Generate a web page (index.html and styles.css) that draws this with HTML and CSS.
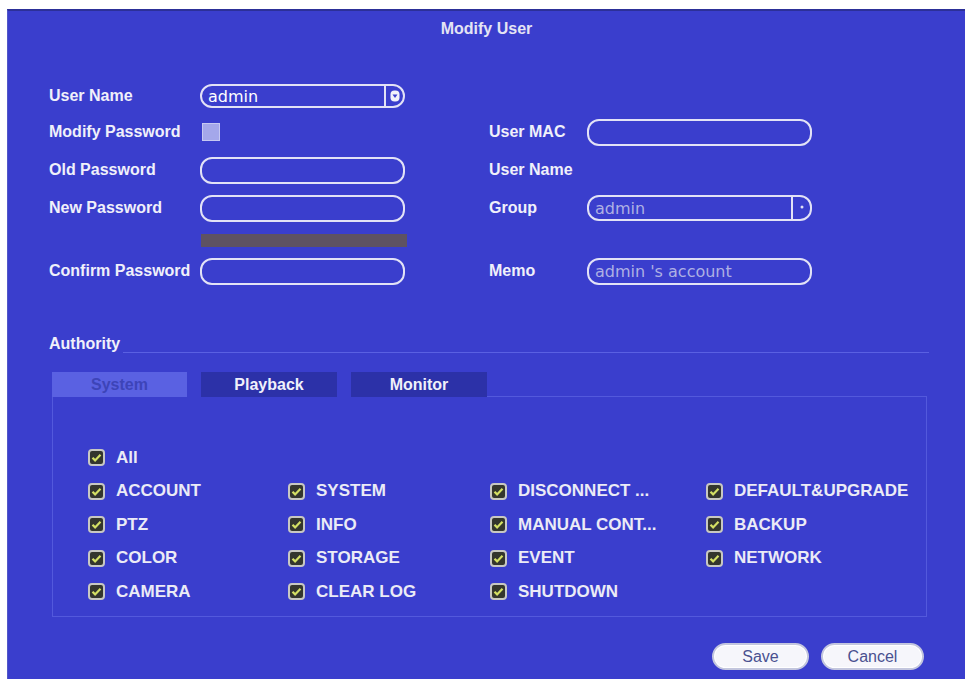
FILE: index.html
```html
<!DOCTYPE html>
<html lang="en">
<head>
  <meta charset="UTF-8">
  <meta name="viewport" content="width=device-width, initial-scale=1.0">
  <title>Modify User</title>
  <link rel="stylesheet" href="styles.css">
</head>
<body>

<div class="panel">
  <div class="title">Modify User</div>

  <form class="user-form" onsubmit="return false">
    <span class="lbl left">User Name</span>
    <div class="field left select">
      <span class="value">admin</span>
      <span class="drop"><svg viewBox="0 0 10 12" width="10" height="12"><rect x="0.5" y="0.5" width="9" height="11" rx="4" fill="#f2f2fa"/><path d="M2.5 4.5h5L5 8z" fill="#3a3ecd"/></svg></span>
    </div>

    <span class="lbl left">Modify Password</span>
    <div class="left"><span class="plain-box"></span></div>
    <span class="lbl right">User MAC</span>
    <div class="field right"></div>

    <span class="lbl left">Old Password</span>
    <div class="field left"></div>
    <span class="lbl right">User Name</span>

    <span class="lbl left">New Password</span>
    <div class="field left"></div>
    <span class="lbl right">Group</span>
    <div class="field right select muted">
      <span class="value">admin</span>
      <span class="drop"><svg viewBox="0 0 10 12" width="10" height="12"><circle cx="5" cy="5" r="1.5" fill="#e0e0f4"/></svg></span>
    </div>

    <div class="strength left"></div>

    <span class="lbl left">Confirm Password</span>
    <div class="field left"></div>
    <span class="lbl right">Memo</span>
    <div class="field right muted"><span class="value">admin 's account</span></div>
  </form>

  <div class="authority-head">
    <span class="lbl">Authority</span>
    <span class="rule"></span>
  </div>

  <div class="tabs">
    <span class="tab active">System</span>
    <span class="tab">Playback</span>
    <span class="tab">Monitor</span>
  </div>

  <div class="rights">
    <div class="right-item all"><svg class="tick" viewBox="0 0 17 17"><rect x="1" y="1" width="15" height="15" rx="3" fill="#34362d" stroke="#c8c8c2" stroke-width="2"/><path d="M4.5 8.8l2.6 2.6 5.4-5.6" fill="none" stroke="#d4e064" stroke-width="2.2"/></svg>All</div>

    <div class="right-item"><svg class="tick" viewBox="0 0 17 17"><rect x="1" y="1" width="15" height="15" rx="3" fill="#34362d" stroke="#c8c8c2" stroke-width="2"/><path d="M4.5 8.8l2.6 2.6 5.4-5.6" fill="none" stroke="#d4e064" stroke-width="2.2"/></svg>ACCOUNT</div>
    <div class="right-item"><svg class="tick" viewBox="0 0 17 17"><rect x="1" y="1" width="15" height="15" rx="3" fill="#34362d" stroke="#c8c8c2" stroke-width="2"/><path d="M4.5 8.8l2.6 2.6 5.4-5.6" fill="none" stroke="#d4e064" stroke-width="2.2"/></svg>SYSTEM</div>
    <div class="right-item"><svg class="tick" viewBox="0 0 17 17"><rect x="1" y="1" width="15" height="15" rx="3" fill="#34362d" stroke="#c8c8c2" stroke-width="2"/><path d="M4.5 8.8l2.6 2.6 5.4-5.6" fill="none" stroke="#d4e064" stroke-width="2.2"/></svg>DISCONNECT ...</div>
    <div class="right-item"><svg class="tick" viewBox="0 0 17 17"><rect x="1" y="1" width="15" height="15" rx="3" fill="#34362d" stroke="#c8c8c2" stroke-width="2"/><path d="M4.5 8.8l2.6 2.6 5.4-5.6" fill="none" stroke="#d4e064" stroke-width="2.2"/></svg>DEFAULT&amp;UPGRADE</div>

    <div class="right-item"><svg class="tick" viewBox="0 0 17 17"><rect x="1" y="1" width="15" height="15" rx="3" fill="#34362d" stroke="#c8c8c2" stroke-width="2"/><path d="M4.5 8.8l2.6 2.6 5.4-5.6" fill="none" stroke="#d4e064" stroke-width="2.2"/></svg>PTZ</div>
    <div class="right-item"><svg class="tick" viewBox="0 0 17 17"><rect x="1" y="1" width="15" height="15" rx="3" fill="#34362d" stroke="#c8c8c2" stroke-width="2"/><path d="M4.5 8.8l2.6 2.6 5.4-5.6" fill="none" stroke="#d4e064" stroke-width="2.2"/></svg>INFO</div>
    <div class="right-item"><svg class="tick" viewBox="0 0 17 17"><rect x="1" y="1" width="15" height="15" rx="3" fill="#34362d" stroke="#c8c8c2" stroke-width="2"/><path d="M4.5 8.8l2.6 2.6 5.4-5.6" fill="none" stroke="#d4e064" stroke-width="2.2"/></svg>MANUAL CONT...</div>
    <div class="right-item"><svg class="tick" viewBox="0 0 17 17"><rect x="1" y="1" width="15" height="15" rx="3" fill="#34362d" stroke="#c8c8c2" stroke-width="2"/><path d="M4.5 8.8l2.6 2.6 5.4-5.6" fill="none" stroke="#d4e064" stroke-width="2.2"/></svg>BACKUP</div>

    <div class="right-item"><svg class="tick" viewBox="0 0 17 17"><rect x="1" y="1" width="15" height="15" rx="3" fill="#34362d" stroke="#c8c8c2" stroke-width="2"/><path d="M4.5 8.8l2.6 2.6 5.4-5.6" fill="none" stroke="#d4e064" stroke-width="2.2"/></svg>COLOR</div>
    <div class="right-item"><svg class="tick" viewBox="0 0 17 17"><rect x="1" y="1" width="15" height="15" rx="3" fill="#34362d" stroke="#c8c8c2" stroke-width="2"/><path d="M4.5 8.8l2.6 2.6 5.4-5.6" fill="none" stroke="#d4e064" stroke-width="2.2"/></svg>STORAGE</div>
    <div class="right-item"><svg class="tick" viewBox="0 0 17 17"><rect x="1" y="1" width="15" height="15" rx="3" fill="#34362d" stroke="#c8c8c2" stroke-width="2"/><path d="M4.5 8.8l2.6 2.6 5.4-5.6" fill="none" stroke="#d4e064" stroke-width="2.2"/></svg>EVENT</div>
    <div class="right-item"><svg class="tick" viewBox="0 0 17 17"><rect x="1" y="1" width="15" height="15" rx="3" fill="#34362d" stroke="#c8c8c2" stroke-width="2"/><path d="M4.5 8.8l2.6 2.6 5.4-5.6" fill="none" stroke="#d4e064" stroke-width="2.2"/></svg>NETWORK</div>

    <div class="right-item"><svg class="tick" viewBox="0 0 17 17"><rect x="1" y="1" width="15" height="15" rx="3" fill="#34362d" stroke="#c8c8c2" stroke-width="2"/><path d="M4.5 8.8l2.6 2.6 5.4-5.6" fill="none" stroke="#d4e064" stroke-width="2.2"/></svg>CAMERA</div>
    <div class="right-item"><svg class="tick" viewBox="0 0 17 17"><rect x="1" y="1" width="15" height="15" rx="3" fill="#34362d" stroke="#c8c8c2" stroke-width="2"/><path d="M4.5 8.8l2.6 2.6 5.4-5.6" fill="none" stroke="#d4e064" stroke-width="2.2"/></svg>CLEAR LOG</div>
    <div class="right-item"><svg class="tick" viewBox="0 0 17 17"><rect x="1" y="1" width="15" height="15" rx="3" fill="#34362d" stroke="#c8c8c2" stroke-width="2"/><path d="M4.5 8.8l2.6 2.6 5.4-5.6" fill="none" stroke="#d4e064" stroke-width="2.2"/></svg>SHUTDOWN</div>
  </div>

  <div class="actions">
    <button type="button" class="btn save">Save</button>
    <button type="button" class="btn cancel">Cancel</button>
  </div>
</div>

</body>
</html>
```

FILE: styles.css
```css
/* DVR style "Modify User" dialog */
body {
  margin: 0;
  background: #ffffff;
  font-family: "Liberation Sans", Arial, sans-serif;
}

.panel {
  margin: 9px 0 0 7px;
  width: 958px;
  height: 670px;
  background: #3a3ecd;
  border-top: 2px solid #2c3098;
  border-left: 1px solid #5257c8;
  padding-left: 41px;
  box-sizing: border-box;
  color: #eeeefa;
}

.title {
  height: 36px;
  line-height: 36px;
  text-align: center;
  font-weight: bold;
  font-size: 16px;
  margin-left: -41px;
  color: #e4e4f4;
}

.lbl {
  font-size: 16px;
  font-weight: bold;
  color: #f0f0fa;
}

/* upper form: left and right column of label/field pairs */
.user-form {
  display: grid;
  grid-template-columns: 151px 205px 84px 98px 225px;
  grid-template-rows: 36px 36px 40px 36px 28px 34px;
  align-items: center;
  margin-top: 31px;
}
.user-form .lbl.left { grid-column: 1; }
.user-form .left:not(.lbl) { grid-column: 2; }
.user-form .lbl.right { grid-column: 4; }
.user-form .field.right { grid-column: 5; }

.field {
  height: 27px;
  border: 2px solid #e2e2f6;
  border-radius: 12px;
  box-sizing: border-box;
  display: flex;
  align-items: center;
  padding-left: 6px;
  font-family: "DejaVu Sans", sans-serif;
  font-size: 16px;
  color: #ffffff;
}
.field.select {
  height: 24px;
  padding-right: 0;
}
.user-form .field.right.select { height: 26px; }
.field .value { flex: 1; }
.field.muted { color: #aeb0e4; }

.drop {
  width: 17px;
  height: 100%;
  border-left: 2px solid #e2e2f6;
  display: flex;
  align-items: center;
  justify-content: center;
}

.plain-box {
  display: block;
  width: 18px;
  height: 18px;
  margin-left: 2px;
  background: #a4a7ea;
  border: 1px solid #c6c8f2;
  box-sizing: border-box;
}

.strength {
  height: 13px;
  width: 206px;
  margin-left: 1px;
  background: #5e5262;
}

/* Authority header with the rule running to the right */
.authority-head {
  display: flex;
  height: 20px;
  margin-top: 47px;
  margin-right: 36px;
}
.authority-head .rule {
  flex: 1;
  height: 1px;
  align-self: flex-end;
  margin: 0 0 2px 3px;
  background: #5a60e2;
}

.tabs {
  display: flex;
  gap: 14px;
  margin: 17px 38px 0 3px;
}
.tabs::after {
  content: "";
  flex: 1;
  margin-left: -14px;
  border-bottom: 1px solid #5359dc;
}
.tab {
  width: 136px;
  height: 25px;
  line-height: 25px;
  text-align: center;
  font-size: 16px;
  font-weight: bold;
  background: #2c31a8;
  color: #f0f0fa;
}
.tab.active {
  width: 135px;
  background: #5a61e2;
  color: #3d44b8;
}

.rights {
  display: grid;
  grid-template-columns: 200px 202px 216px auto;
  grid-auto-rows: 33.5px;
  align-items: center;
  margin: 0 38px 0 3px;
  padding: 44px 0 8px 35px;
  height: 220px;
  box-sizing: border-box;
  border: 1px solid #5359dc;
  border-top: none;
}
.right-item {
  display: flex;
  align-items: center;
  gap: 11px;
  font-size: 17px;
  font-weight: bold;
  color: #ebebf6;
  white-space: nowrap;
}
.right-item.all { grid-column: 1 / -1; }
.tick {
  width: 17px;
  height: 17px;
  flex: none;
}

.actions {
  display: flex;
  justify-content: flex-end;
  gap: 12px;
  margin: 26px 41px 0 0;
}
.btn {
  width: 97px;
  height: 27px;
  border-radius: 14px;
  border: 2px solid #c3c6de;
  background: #f6f6fb;
  box-shadow: inset 0 0 0 1px #ffffff;
  color: #4a5190;
  font-family: "Liberation Sans", Arial, sans-serif;
  font-size: 16px;
  padding: 0;
  cursor: pointer;
}
.btn.cancel { width: 103px; }
```
